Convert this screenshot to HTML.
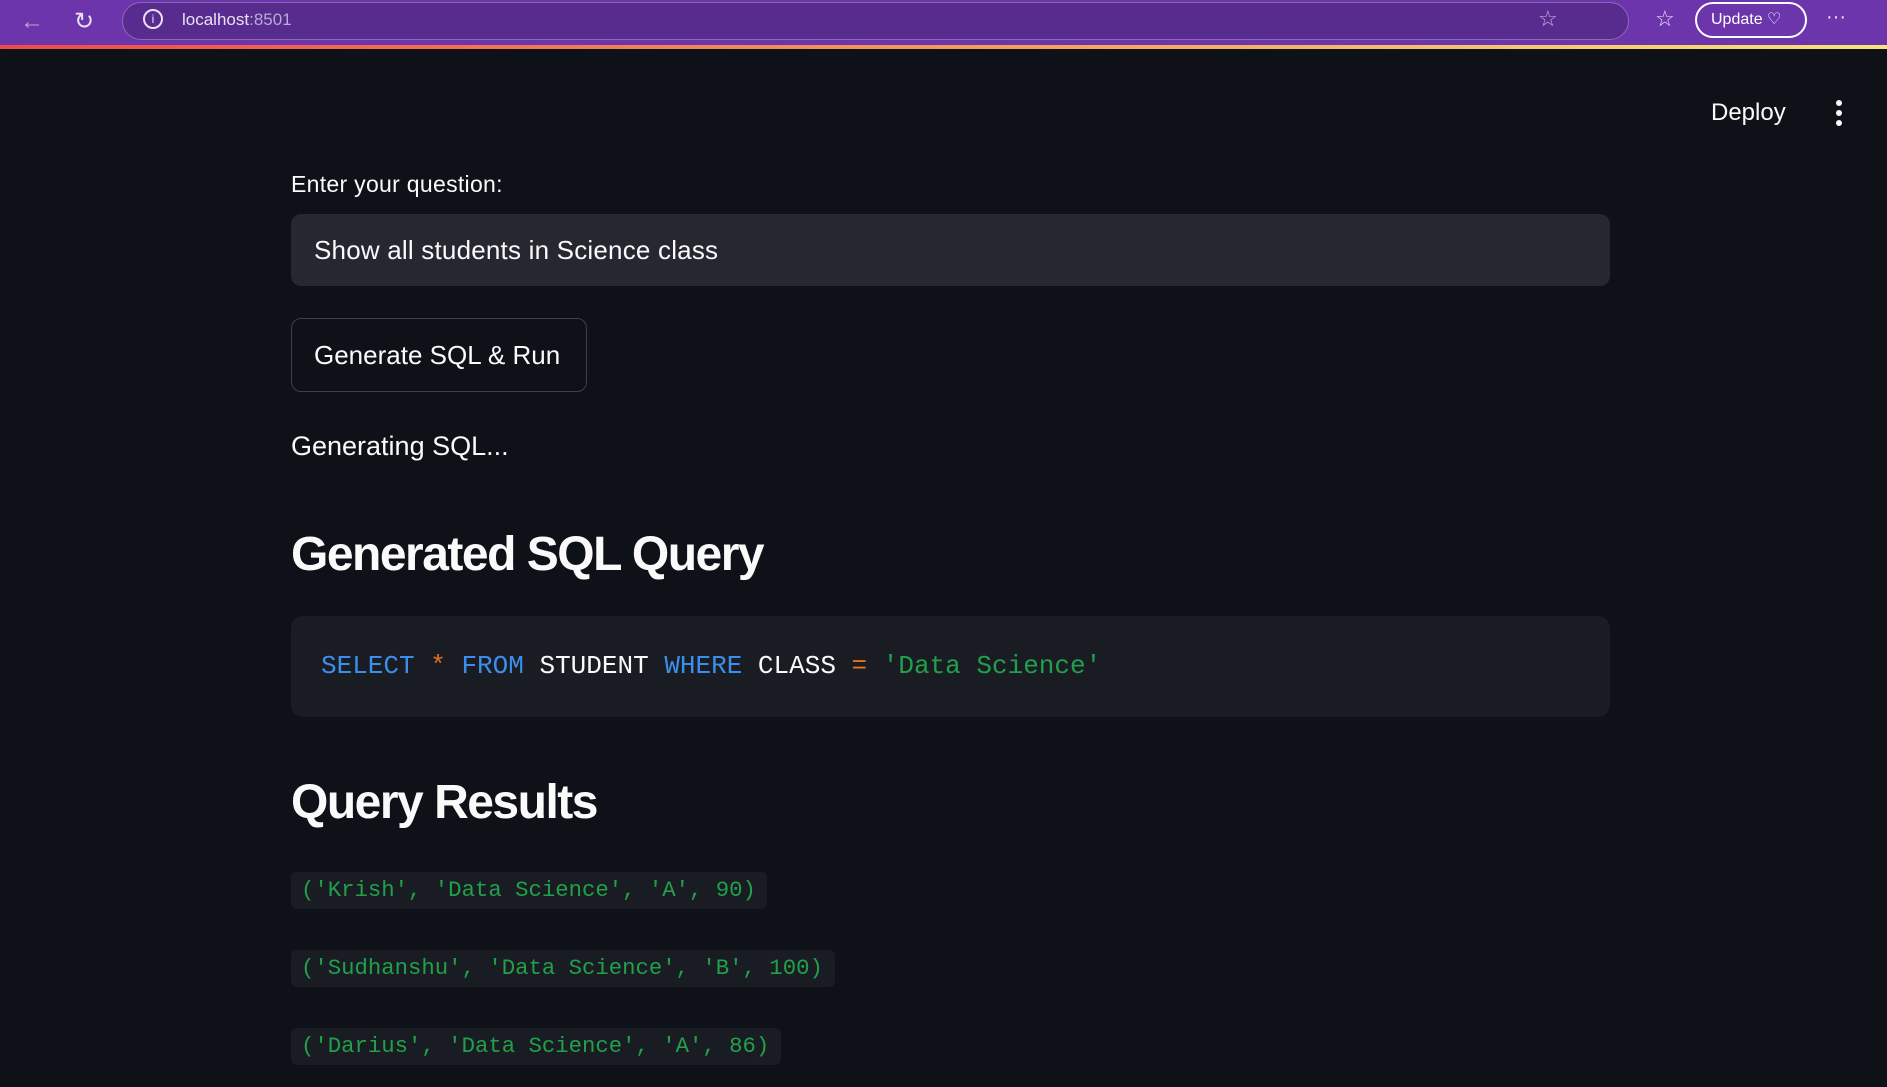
<!DOCTYPE html>
<html><head><style>
*{margin:0;padding:0;box-sizing:border-box}
body{width:1887px;height:1087px;overflow:hidden;background:#0e1117;font-family:"Liberation Sans",sans-serif;color:#fafafa;position:relative}
.top{position:absolute;left:0;top:0;width:1887px;height:46px;background:#6d35ab}
.addr{position:absolute;left:122px;top:2px;width:1507px;height:38px;border-radius:19px;background:#582c8f;border:1px solid #8a6ab8}
.grad{position:absolute;left:0;top:45px;width:1887px;height:4px;background:linear-gradient(90deg,#f04a4a,#f59a5a 50%,#f8e27a)}
.ab{position:absolute;color:#e8e0f4;font-size:17px}
.a{position:absolute}
.code{font-family:"Liberation Mono",monospace}
.pill{position:absolute;left:291px;height:37px;background:#1a1c24;border-radius:6px;color:#21a04a;font-family:"Liberation Mono",monospace;font-size:22.3px;line-height:37px;padding:0 10px;white-space:pre}
h{display:block}
</style></head><body>
<div class="top"></div>
<div class="addr"></div>
<div class="grad"></div>
<div class="ab" style="left:20px;top:8px;font-size:24px;color:#b9a6d6">←</div>
<div class="ab" style="left:74px;top:7px;font-size:24px">↻</div>
<div class="ab" style="left:143px;top:9px;width:20px;height:20px;border:2px solid #e8e0f4;border-radius:50%;font-size:12px;text-align:center;line-height:16px">i</div>
<div class="ab" style="left:182px;top:10px">localhost<span style="color:#bba9d8">:8501</span></div>
<div class="ab" style="left:1538px;top:6px;font-size:22px;color:#c4b4de">☆</div>
<div class="ab" style="left:1655px;top:6px;font-size:22px">☆</div>
<div class="a" style="left:1695px;top:2px;width:112px;height:36px;border:2px solid #fff;border-radius:18px;color:#fff;font-size:16px;line-height:32px;padding-left:14px">Update ♡</div>
<div class="ab" style="left:1826px;top:6px;font-size:20px">···</div>
<div class="a" style="left:1711px;top:99px;font-size:24px">Deploy</div>
<div class="a" style="left:1836px;top:100px;width:6px;height:6px;border-radius:3px;background:#fafafa;box-shadow:0 10px 0 #fafafa,0 20px 0 #fafafa"></div>
<div class="a" style="left:291px;top:171px;font-size:23px;letter-spacing:0.3px">Enter your question:</div>
<div class="a" style="left:291px;top:214px;width:1319px;height:72px;background:#262730;border-radius:10px;font-size:26px;line-height:72px;padding-left:23px;letter-spacing:0.2px">Show all students in Science class</div>
<div class="a" style="left:291px;top:318px;width:296px;height:74px;border:1px solid #3d3f4a;border-radius:10px;font-size:26px;line-height:72px;padding-left:22px">Generate SQL &amp; Run</div>
<div class="a" style="left:291px;top:431px;font-size:27px">Generating SQL...</div>
<div class="a" style="left:291px;top:527px;font-size:48px;font-weight:bold;letter-spacing:-1.5px">Generated SQL Query</div>
<div class="a code" style="left:291px;top:616px;width:1319px;height:101px;background:#1a1c24;border-radius:12px;font-size:26px;line-height:101px;padding-left:30px;white-space:pre"><span style="color:#3b8eea">SELECT</span> <span style="color:#e8711b">*</span> <span style="color:#3b8eea">FROM</span> STUDENT <span style="color:#3b8eea">WHERE</span> CLASS <span style="color:#e8711b">=</span> <span style="color:#21a04a">'Data Science'</span></div>
<div class="a" style="left:291px;top:775px;font-size:48px;font-weight:bold;letter-spacing:-1.5px">Query Results</div>
<div class="pill" style="top:872px;width:476px">('Krish', 'Data Science', 'A', 90)</div>
<div class="pill" style="top:950px;width:544px">('Sudhanshu', 'Data Science', 'B', 100)</div>
<div class="pill" style="top:1028px;width:490px">('Darius', 'Data Science', 'A', 86)</div>
</body></html>
